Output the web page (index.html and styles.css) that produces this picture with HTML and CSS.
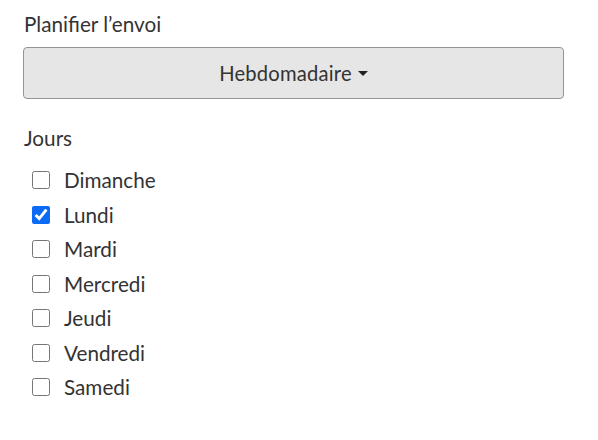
FILE: index.html
```html
<!DOCTYPE html>
<html lang="fr">
<head>
<meta charset="utf-8">
<link rel="stylesheet" href="styles.css">
</head>
<body>
<div class="form">
  <div class="label">Planifier l’envoi</div>
  <button class="dropdown" type="button">Hebdomadaire<span class="caret"></span></button>
  <div class="label days-label">Jours</div>
  <ul class="days">
    <li><label><input type="checkbox"><span>Dimanche</span></label></li>
    <li><label><input type="checkbox" checked><span>Lundi</span></label></li>
    <li><label><input type="checkbox"><span>Mardi</span></label></li>
    <li><label><input type="checkbox"><span>Mercredi</span></label></li>
    <li><label><input type="checkbox"><span>Jeudi</span></label></li>
    <li><label><input type="checkbox"><span>Vendredi</span></label></li>
    <li><label><input type="checkbox"><span>Samedi</span></label></li>
  </ul>
</div>
</body>
</html>
```
FILE: styles.css
```css
html, body {
  margin: 0;
  background: #fff;
}
body {
  font-family: Lato, "Open Sans", sans-serif;
  color: #333;
}
.form {
  padding: 10px 34px 0 23px;
  display: flex;
  flex-direction: column;
}
.label {
  font-size: 20.7px;
  line-height: 28px;
  padding-left: 1px;
}
.dropdown {
  margin-top: 9px;
  height: 52px;
  width: 541px;
  background: #e6e6e6;
  border: 1px solid #959595;
  border-radius: 4px;
  font-family: inherit;
  font-size: 20.2px;
  letter-spacing: 0.2px;
  color: #333;
  display: flex;
  align-items: center;
  justify-content: center;
  padding: 0;
}
.caret {
  display: inline-block;
  width: 0;
  height: 0;
  margin-left: 6px;
  margin-top: 1px;
  border-left: 5px solid transparent;
  border-right: 5px solid transparent;
  border-top: 5px solid #222;
}
.days-label {
  margin-top: 25px;
}
.days {
  list-style: none;
  margin: 15px 0 0 0;
  padding: 0 0 0 9px;
  display: flex;
  flex-direction: column;
  gap: 8px;
}
.days label {
  display: flex;
  align-items: center;
  font-size: 20.7px;
  line-height: 26.5px;
}
.days input {
  width: 18px;
  height: 18px;
  margin: 0 14px 0 0;
  accent-color: #0b6bf5;
}
```
